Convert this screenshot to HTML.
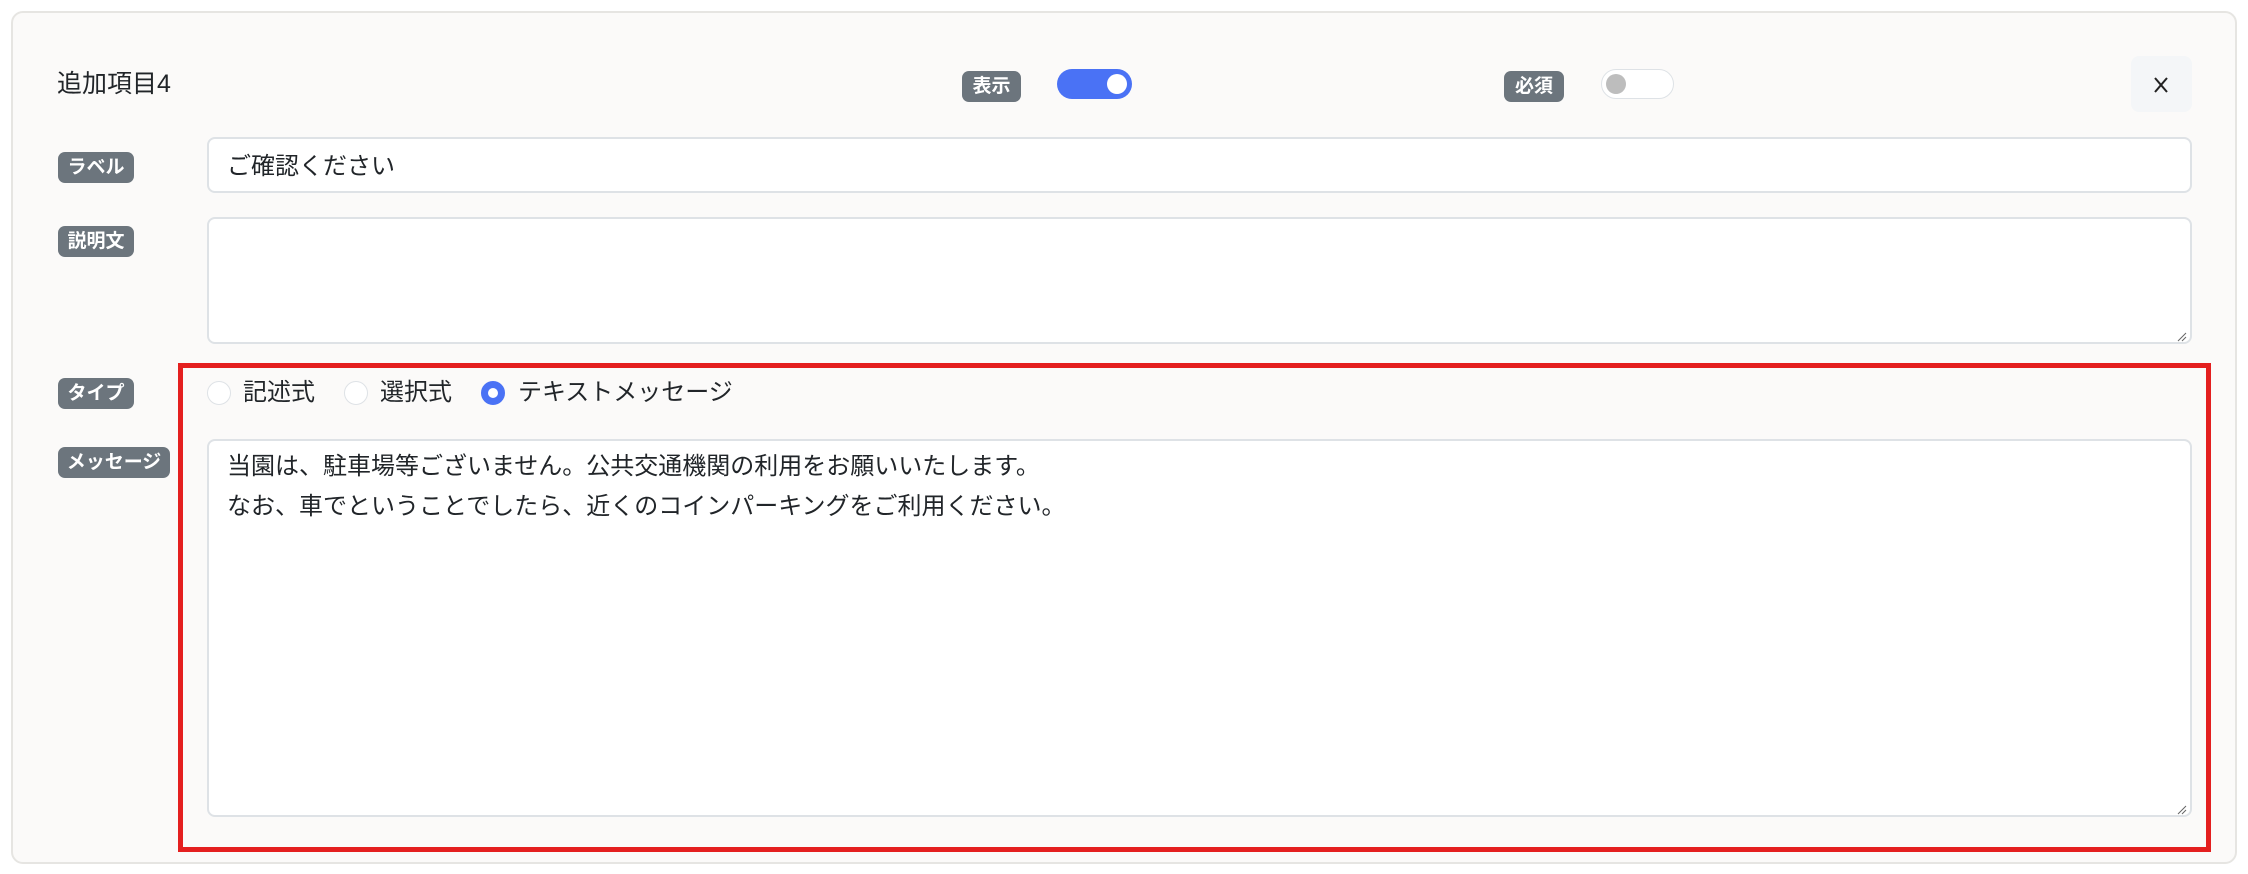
<!DOCTYPE html>
<html><head><meta charset="utf-8"><style>
*{box-sizing:border-box;margin:0;padding:0}
body{width:2248px;height:874px;background:#fff;font-family:"Liberation Sans","Noto Sans CJK JP",sans-serif;color:#212529;position:relative;overflow:hidden}
.abs{position:absolute}
.card{left:11px;top:11px;width:2226px;height:853px;background:#fbfaf9;border:2px solid #e6e5e2;border-radius:12px}
.badge{position:absolute;background:#6c757d;color:#fff;font-weight:bold;font-size:19px;border-radius:7px;height:31px;line-height:31px;text-align:center}
.input{position:absolute;background:#fff;border:2px solid #dee2e6;border-radius:8px}
.t{position:absolute;font-size:24px;white-space:nowrap;line-height:1}
.radio{position:absolute;width:24px;height:24px;border-radius:50%;border:1.5px solid #dee2e6;background:#fff}
</style></head><body>
<div class="abs card"></div>
<div class="t" style="left:57px;top:72px;font-size:25px">追加項目4</div>
<div class="badge" style="left:962px;top:71px;width:59px">表示</div>
<div class="abs" style="left:1057px;top:69px;width:75px;height:30px;border-radius:15px;background:#4a72f5"></div>
<div class="abs" style="left:1107px;top:74px;width:20px;height:20px;border-radius:50%;background:#fff"></div>
<div class="badge" style="left:1504px;top:71px;width:60px">必須</div>
<div class="abs" style="left:1601px;top:69px;width:73px;height:30px;border-radius:15px;background:#fff;border:1.5px solid #dee2e6"></div>
<div class="abs" style="left:1606px;top:74px;width:20px;height:20px;border-radius:50%;background:#bdbdbd"></div>
<div class="abs" style="left:2131px;top:56px;width:61px;height:56px;border-radius:8px;background:#f4f6f8"></div>
<svg class="abs" style="left:2150px;top:74px" width="22" height="22" viewBox="0 0 22 22"><path d="M5 4L17 18M17 4L5 18" stroke="#222" stroke-width="2"/></svg>

<div class="badge" style="left:58px;top:152px;width:76px">ラベル</div>
<div class="input" style="left:207px;top:137px;width:1985px;height:56px"></div>
<div class="t" style="left:227px;top:155px">ご確認ください</div>

<div class="badge" style="left:58px;top:226px;width:76px">説明文</div>
<div class="input" style="left:207px;top:217px;width:1985px;height:127px"></div>

<div class="abs" style="left:178px;top:363px;width:2033px;height:489px;border:5px solid #e41f1f"></div>
<div class="badge" style="left:58px;top:378px;width:76px">タイプ</div>
<div class="radio" style="left:207px;top:381px"></div>
<div class="t" style="left:243px;top:381px">記述式</div>
<div class="radio" style="left:344px;top:381px"></div>
<div class="t" style="left:380px;top:381px">選択式</div>
<div class="radio" style="left:481px;top:381px;border:7px solid #4a72f5"></div>
<div class="t" style="left:518px;top:381px">テキストメッセージ</div>

<div class="badge" style="left:58px;top:447px;width:112px">メッセージ</div>
<div class="input" style="left:207px;top:439px;width:1985px;height:378px"></div>
<div class="t" style="left:227px;top:455px">当園は、駐車場等ございません。公共交通機関の利用をお願いいたします。</div>
<div class="t" style="left:227px;top:495px">なお、車でということでしたら、近くのコインパーキングをご利用ください。</div>
<svg class="abs" style="left:2177px;top:332px" width="10" height="10"><path d="M1 9L9 1M5 9L9 5" stroke="#666" stroke-width="1"/></svg>
<svg class="abs" style="left:2177px;top:805px" width="10" height="10"><path d="M1 9L9 1M5 9L9 5" stroke="#666" stroke-width="1"/></svg>
</body></html>
